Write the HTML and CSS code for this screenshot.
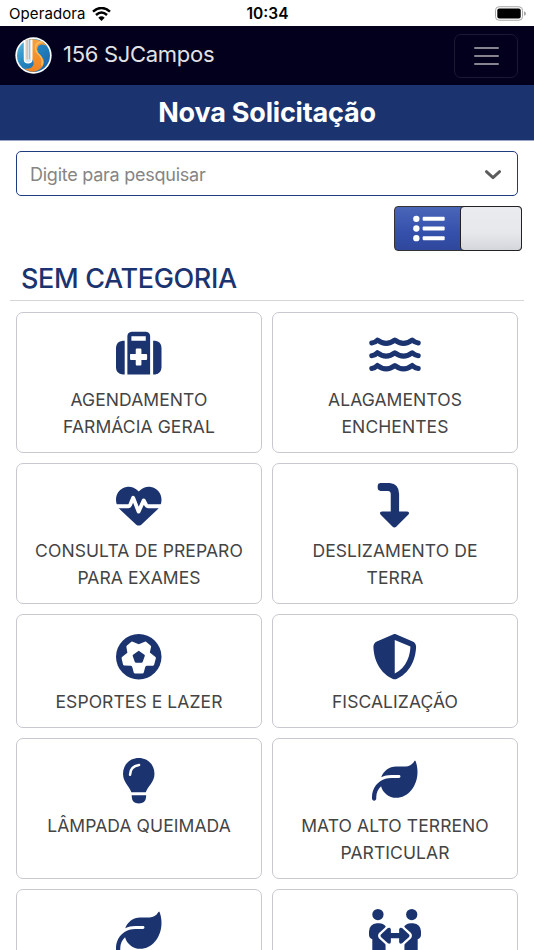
FILE: index.html
```html
<!DOCTYPE html>
<html lang="pt-BR">
<head>
  <meta charset="UTF-8">
  <meta name="viewport" content="width=device-width, initial-scale=1.0">
  <title>156 SJCampos</title>
  <link rel="stylesheet" href="styles.css">
</head>
<body>
  <div class="status-bar">
    <div class="carrier">
      <span>Operadora</span>
      <svg class="wifi" viewBox="0 0 57 42">
        <path d="M3 14Q28.500 -8 54 14M12 24Q28.500 9 45 24" fill="none" stroke="#000" stroke-width="7.500"/>
        <path d="M19 32Q28.500 24 38 32L28.500 42Z"/>
      </svg>
    </div>
    <span class="clock">10:34</span>
    <div class="status-right">
      <svg class="battery" viewBox="0 0 94 44">
        <rect x="1.500" y="1.500" width="82" height="41" rx="11" fill="none" stroke="#a5a5a5" stroke-width="3"/>
        <rect x="7" y="7" width="71" height="30" rx="6"/>
        <path d="M88 15Q94 17 94 22Q94 27 88 29Z" fill="#a5a5a5"/>
      </svg>
    </div>
  </div>

  <nav class="navbar">
    <a class="brand">
      <svg class="logo" viewBox="0 0 110 110">
        <defs>
          <linearGradient id="blue" x1="0" y1="0" x2="1" y2="1">
            <stop offset="0" stop-color="#5cc0e2"/>
            <stop offset="0.450" stop-color="#2485c0"/>
            <stop offset="1" stop-color="#1b5fa5"/>
          </linearGradient>
          <linearGradient id="orange" x1="0" y1="0" x2="0" y2="1">
            <stop offset="0" stop-color="#f6a13a"/>
            <stop offset="1" stop-color="#ef8424"/>
          </linearGradient>
        </defs>
        <circle cx="55" cy="55" r="54" fill="#fff"/>
        <circle cx="55" cy="55" r="49" fill="url(#blue)"/>
        <path d="M30 13Q55 -1 82 15Q90 20 93 26Q72 17 67 32Q63 44 77 56Q93 72 81 89Q69 103 50 103Q35 101 26 94Q51 97 55 82Q57 73 49 65L28 54Z" fill="url(#orange)"/>
        <path d="M82 15Q65 13 61 28Q59 42 73 54Q84 66 80 85" fill="none" stroke="#f8c25f" stroke-width="4"/>
        <path d="M28 10V66Q28 77 39 77Q50 77 50 66V8" fill="#d8e7ef" stroke="#fff" stroke-width="4"/>
        <path d="M36 8V66M43 7V66" stroke="#e58c43" stroke-width="2"/>
      </svg>
      <span class="brand-name">156 SJCampos</span>
    </a>
    <button class="navbar-toggler" aria-label="Menu">
      <span></span>
      <span></span>
      <span></span>
    </button>
  </nav>

  <h1 class="page-title">Nova Solicitação</h1>

  <main class="content">
    <div class="search">
      <span>Digite para pesquisar</span>
      <svg class="chevron" viewBox="0 0 45 27">
        <path d="M4 4L22.500 21L41 4" fill="none" stroke="#5c5c5c" stroke-width="8" stroke-linecap="round" stroke-linejoin="round"/>
      </svg>
    </div>

    <div class="toggle">
      <div class="toggle-on">
        <svg class="list-icon" viewBox="0 0 96 80">
          <g fill="#fff">
            <circle cx="10" cy="11" r="9.500"/>
            <circle cx="10" cy="40" r="9.500"/>
            <circle cx="10" cy="69" r="9.500"/>
            <rect x="29" y="5" width="66" height="12" rx="3"/>
            <rect x="29" y="34" width="66" height="12" rx="3"/>
            <rect x="29" y="63" width="66" height="12" rx="3"/>
          </g>
        </svg>
      </div>
      <div class="toggle-off"></div>
    </div>

    <h2 class="category">SEM CATEGORIA</h2>

    <div class="grid">
      <a class="card">
        <svg class="icon" viewBox="0 0 136 136">
          <path d="M26 26V127H20Q0 125 0 106V47Q1 28 20 26ZM111 26V127H117Q135 125 136 106V47Q135 28 117 26Z"/>
          <path fill-rule="evenodd" d="M34 127V12Q35 0 47 -1H90Q101 0 102 12V127ZM46 13V26H89V13ZM59 50V66H43Q42 66 42 68V81Q42 84 45 84H59V97Q59 100 62 100H73Q76 100 76 97V84H90Q93 84 93 81V69Q93 66 90 66H76V52Q76 49 73 49H62Q59 49 59 52Z"/>
        </svg>
        <span>AGENDAMENTO<br>FARMÁCIA GERAL</span>
      </a>
      <a class="card">
        <svg class="icon icon-wide" viewBox="0 0 153 136">
          <g fill="none" stroke="#1b3470" stroke-width="15" stroke-linecap="round" stroke-linejoin="round">
            <path d="M7 33Q17 32 24 24Q50 44 76 24Q102 44 128 24Q136 32 146 33"/>
            <path d="M7 71Q17 70 24 62Q50 82 76 62Q102 82 128 62Q136 70 146 71"/>
            <path d="M7 109Q17 108 24 100Q50 120 76 100Q102 120 128 100Q136 108 146 109"/>
          </g>
        </svg>
        <span>ALAGAMENTOS<br>ENCHENTES</span>
      </a>
      <a class="card">
        <svg class="icon" viewBox="0 0 512 512">
          <path d="M228 469L48 300C17 272 0 232 0 191V185C0 115 50 56 119 44C165 36 211 51 244 84L256 96L268 84C301 51 347 36 393 44C461 56 512 115 512 185V191C512 232 495 272 464 300L284 469Q256 490 228 469Z"/>
          <path class="cut" d="M0 262H140Q153 262 158 249L193 165L254 322L312 196L340 250Q346 262 359 262H512"/>
        </svg>
        <span>CONSULTA DE PREPARO<br>PARA EXAMES</span>
      </a>
      <a class="card">
        <svg class="icon" viewBox="0 0 136 136">
          <path d="M25 0H53Q81 3 81 32V85H105Q114 87 109 94L73 130Q67 136 61 130L26 95Q20 87 30 85H56V33Q56 25 48 24H25Q17 23 17 16V8Q17 1 25 0Z"/>
        </svg>
        <span>DESLIZAMENTO DE<br>TERRA</span>
      </a>
      <a class="card">
        <svg class="icon" viewBox="0 0 136 136">
          <circle cx="68" cy="68" r="68"/>
          <path class="white" d="M32 35L46 23Q48 22 50 23L68 31L86 23Q88 22 90 23L103 34Q105 35 105 38L101 55L118 69Q120 71 119 73L114 92Q113 94 111 95H92Q88 96 87 100L83 115Q82 118 79 118H57Q54 118 53 115L49 100Q48 96 44 95L25 94Q22 94 21 91L17 74Q16 71 18 69L34 56L31 38Q31 36 32 35Z"/>
          <path d="M68 50L85 62Q87 64 86 66L80 83Q79 86 76 86H60Q57 86 56 83L50 66Q49 64 51 62Z"/>
        </svg>
        <span>ESPORTES E LAZER</span>
      </a>
      <a class="card">
        <svg class="icon" viewBox="0 0 512 512">
          <path fill-rule="evenodd" d="M256 0c5 0 9 1 13 3l189 80c22 9 38 31 38 57-1 99-41 281-214 363-16 8-36 8-52 0C57 421 17 239 16 140c0-26 16-48 38-57L243 3c4-2 8-3 13-3zm0 67v378C394 378 431 230 432 141L256 67z"/>
        </svg>
        <span>FISCALIZAÇÃO</span>
      </a>
      <a class="card">
        <svg class="icon" viewBox="0 0 136 136">
          <path d="M68 0C95 0 115 20 115 47C115 72 96 83 89 102H46C39 83 21 72 21 47C21 20 41 0 68 0ZM47 111H90V116Q89 136 68 136Q48 136 47 116Z"/>
          <path d="M42 50Q42 25 69 21" fill="none" stroke="#fff" stroke-width="7.500" stroke-linecap="round"/>
        </svg>
        <span>LÂMPADA QUEIMADA</span>
      </a>
      <a class="card">
        <svg class="icon" viewBox="0 0 512 512">
          <path d="M272 96c-79 0-145 51-168 122 34-17 72-26 112-26h88c9 0 16 7 16 16s-7 16-16 16h-88c-45 0-86 13-120 36C38 299 0 365 0 440v16c0 13 11 24 24 24s24-11 24-24v-16c0-49 21-93 54-123 20 75 88 131 170 131h1c132-1 239-131 239-291 0-43-7-83-21-120-3-7-13-7-16 0-19 35-56 59-99 59z"/>
        </svg>
        <span>MATO ALTO TERRENO<br>PARTICULAR</span>
      </a>
      <a class="card">
        <svg class="icon" viewBox="0 0 512 512">
          <path d="M272 96c-79 0-145 51-168 122 34-17 72-26 112-26h88c9 0 16 7 16 16s-7 16-16 16h-88c-45 0-86 13-120 36C38 299 0 365 0 440v16c0 13 11 24 24 24s24-11 24-24v-16c0-49 21-93 54-123 20 75 88 131 170 131h1c132-1 239-131 239-291 0-43-7-83-21-120-3-7-13-7-16 0-19 35-56 59-99 59z"/>
        </svg>
      </a>
      <a class="card">
        <svg class="icon icon-wide" viewBox="0 0 157 136">
          <circle cx="27" cy="16" r="17"/>
          <circle cx="129" cy="16" r="17"/>
          <path d="M24 42H31Q43 42 50 51V136H10V91Q0 87 0 77V67Q1 44 24 42ZM126 42H133Q156 44 157 67V77Q157 87 147 91V136H107V51Q114 42 126 42Z"/>
          <path class="arrows" d="M36 76L57 57Q65 53 66 61V72H91V61Q92 53 100 57L121 76Q124 80 121 84L100 103Q92 107 91 99V88H66V99Q65 107 57 103L36 84Q33 80 36 76Z"/>
        </svg>
      </a>
    </div>
  </main>
</body>
</html>
```
FILE: styles.css
```css
* {
  box-sizing: border-box;
}
body {
  margin: 0;
  height: 950px;
  overflow: hidden;
  background-color: #fff;
  font-family: Inter, "Liberation Sans", sans-serif;
}
.status-bar {
  display: grid;
  grid-template-columns: 1fr auto 1fr;
  align-items: center;
  height: 26px;
  padding: 1px 8px 0 9px;
  font-size: 15px;
  color: #000;
}
.carrier {
  display: flex;
  align-items: center;
  gap: 6px;
  letter-spacing: 0.1px;
}
.wifi {
  width: 19px;
  height: 14px;
}
.clock {
  font-size: 15.500px;
  font-weight: 600;
}
.status-right {
  display: flex;
  justify-content: flex-end;
}
.battery {
  width: 31px;
  height: 15px;
}
.navbar {
  display: flex;
  align-items: center;
  justify-content: space-between;
  height: 59px;
  padding: 0 16px 0 15px;
  background-color: #02001c;
}
.brand {
  display: flex;
  align-items: center;
  gap: 11px;
  font-size: 22px;
  letter-spacing: -0.3px;
  color: #e2e2e6;
}
.brand-name {
  padding-bottom: 3px;
}
.logo {
  width: 37px;
  height: 37px;
}
.navbar-toggler {
  display: flex;
  flex-direction: column;
  align-items: center;
  justify-content: center;
  gap: 6px;
  width: 64px;
  height: 44px;
  padding: 0;
  border: 1px solid #1b1a33;
  border-radius: 7px;
  background: none;
}
.navbar-toggler span {
  width: 25px;
  height: 2px;
  border-radius: 1px;
  background-color: #85848f;
}
.page-title {
  height: 56px;
  margin: 0;
  border-bottom: 1px solid #98a5c5;
  background-color: #1b3470;
  color: #fff;
  font-size: 27px;
  font-weight: 700;
  letter-spacing: -0.2px;
  line-height: 55px;
  text-align: center;
}
.content {
  padding: 10px 16px 0;
}
.search {
  display: flex;
  align-items: center;
  justify-content: space-between;
  height: 45px;
  padding: 1px 16px 0 13px;
  border: 1px solid #1f3d7e;
  border-radius: 5px;
  font-size: 18px;
  letter-spacing: -0.25px;
  color: #858585;
}
.chevron {
  width: 16px;
  height: 10px;
  margin-top: 2px;
}
.toggle {
  display: flex;
  width: 128px;
  height: 45px;
  margin: 10px -4px 0 auto;
  border: 1px solid #333;
  border-radius: 4px;
  background: linear-gradient(#4a66b8, #3450ab 60%, #2f489c);
}
.toggle-on {
  display: flex;
  align-items: center;
  justify-content: center;
  width: 66px;
  padding-left: 2px;
}
.list-icon {
  width: 32px;
  height: 27px;
}
.toggle-off {
  flex: 1;
  margin: -1px;
  border: 1px solid #222;
  border-radius: 4px;
  background: linear-gradient(#eaebef 0%, #e6e8ec 60%, #d3d6da);
}
.category {
  height: 50px;
  margin: 0 -6px 11px;
  padding-left: 11px;
  border-bottom: 1px solid #d5d6d8;
  color: #1b3470;
  font-size: 27px;
  font-weight: 500;
  letter-spacing: -0.35px;
  line-height: 55px;
}
.grid {
  display: grid;
  grid-template-columns: 1fr 1fr;
  gap: 10px;
}
.card {
  display: flex;
  flex-direction: column;
  align-items: center;
  padding: 18.500px 10px 12px;
  border: 1px solid #c8c8d0;
  border-radius: 7px;
  font-size: 17.500px;
  letter-spacing: 0.08px;
  line-height: 27px;
  color: #444;
  text-align: center;
}
.icon {
  width: 45.500px;
  height: 45.500px;
  margin-bottom: 9px;
  fill: #1b3470;
  overflow: visible;
}
.icon-wide {
  width: 52px;
}
.cut {
  fill: none;
  stroke: #fff;
  stroke-width: 43;
  stroke-linejoin: round;
}
.white {
  fill: #fff;
}
.arrows {
  stroke: #fff;
  stroke-width: 14;
  paint-order: stroke;
}
```
